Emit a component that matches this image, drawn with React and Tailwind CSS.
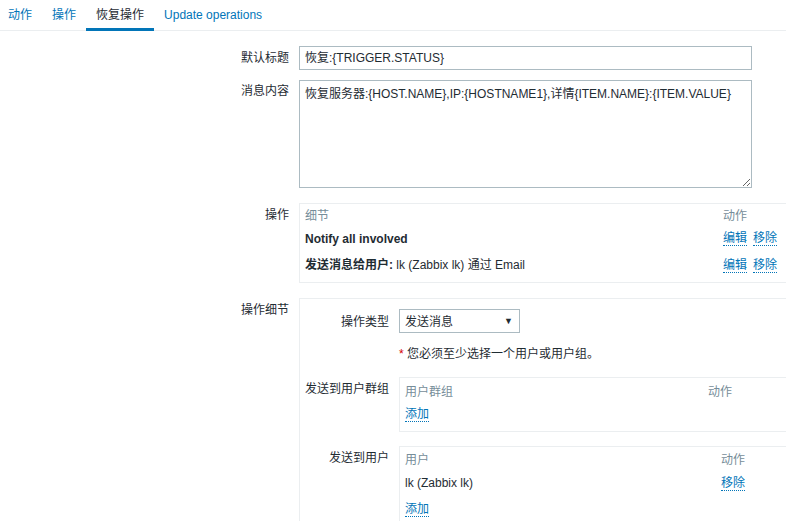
import React from 'react';

const Link = ({ children }) => (
  <span className="text-[#0275b8] border-b border-dotted border-[#0275b8] leading-[14px] cursor-pointer">
    {children}
  </span>
);

const Label = ({ children, className = '' }) => (
  <div className={`w-[299px] shrink-0 pr-[10px] text-right pt-[4px] ${className}`}>{children}</div>
);

const App = () => {
  const tabs = ['动作', '操作', '恢复操作', 'Update operations'];

  return (
    <div className="w-[786px] h-[521px] overflow-hidden bg-white text-[12px] leading-[14px] text-[#1f2c33] font-['Liberation_Sans','Noto_Sans_CJK_SC',sans-serif]">
      {/* 탭 */}
      <div className="flex h-[31px] border-b border-[#ebeef0] -ml-0.5">
        {tabs.map((t, i) => (
          <div
            key={t}
            className={`h-[31px] -mb-px px-[10px] pt-[8px] border-b-[3px] ${
              i === 2 ? 'border-[#0275b8] text-[#1f2c33]' : 'border-transparent text-[#0275b8]'
            }`}
          >
            {t}
          </div>
        ))}
      </div>

      <div className="mt-[15px]">
        {/* 默认标题 */}
        <div className="flex">
          <Label className="pt-[5px]">默认标题</Label>
          <div className="w-[453px] h-[24px] border border-[#acbbc2] px-[5px] flex items-center">
            恢复:{'{TRIGGER.STATUS}'}
          </div>
        </div>

        {/* 消息内容 */}
        <div className="flex mt-[10px]">
          <Label>消息内容</Label>
          <textarea
            className="w-[453px] h-[108px] border border-[#acbbc2] px-[5px] pt-[6px] text-[12px] leading-[14px] outline-none resize"
            defaultValue="恢复服务器:{HOST.NAME},IP:{HOSTNAME1},详情{ITEM.NAME}:{ITEM.VALUE}"
          />
        </div>

        {/* 操作 */}
        <div className="flex mt-[15px]">
          <Label className="pt-[5px]">操作</Label>
          <div className="w-[520px] shrink-0 border border-[#ebeef0] px-[5px] pt-[2px] pb-[3px]">
            <div className="flex h-[20px] items-center text-[#768d99]">
              <div className="w-[418px]">细节</div>
              <div>动作</div>
            </div>
            <div className="flex h-[25px] items-center">
              <div className="w-[418px] font-bold">Notify all involved</div>
              <div className="flex gap-[6px]">
                <Link>编辑</Link>
                <Link>移除</Link>
              </div>
            </div>
            <div className="flex h-[28px] items-center">
              <div className="w-[418px]">
                <span className="font-bold">发送消息给用户:</span> lk (Zabbix lk) 通过 Email
              </div>
              <div className="flex gap-[6px]">
                <Link>编辑</Link>
                <Link>移除</Link>
              </div>
            </div>
          </div>
        </div>

        {/* 操作细节 */}
        <div className="flex mt-[15px]">
          <Label className="pt-[5px]">操作细节</Label>
          <div className="w-[560px] shrink-0 border border-[#ebeef0] pt-[10px] pb-[20px]">
            <div className="flex">
              <div className="w-[99px] shrink-0 pr-[10px] text-right pt-[6px]">操作类型</div>
              <div className="w-[121px] h-[24px] border border-[#acbbc2] px-[5px] flex items-center justify-between">
                <span className="pt-[1px]">发送消息</span>
                <span className="text-[9px] mr-[1px]">▼</span>
              </div>
            </div>

            <div className="flex mt-[14px]">
              <div className="w-[99px] shrink-0" />
              <div>
                <span className="text-[#d40000]">*</span> 您必须至少选择一个用户或用户组。
              </div>
            </div>

            {/* 发送到用户群组 */}
            <div className="flex mt-[16px]">
              <div className="w-[99px] shrink-0 pr-[10px] text-right pt-[5px]">发送到用户群组</div>
              <div className="w-[420px] shrink-0 border border-[#ebeef0] px-[5px] pt-[3px] pb-[6px]">
                <div className="flex h-[22px] items-center text-[#768d99]">
                  <div className="w-[303px]">用户群组</div>
                  <div>动作</div>
                </div>
                <div className="flex h-[22px] items-center">
                  <Link>添加</Link>
                </div>
              </div>
            </div>

            {/* 发送到用户 */}
            <div className="flex mt-[14px]">
              <div className="w-[99px] shrink-0 pr-[10px] text-right pt-[5px]">发送到用户</div>
              <div className="w-[420px] shrink-0 border border-[#ebeef0] px-[5px] pt-[1px] pb-[4px]">
                <div className="flex h-[24px] items-center text-[#768d99]">
                  <div className="w-[316px]">用户</div>
                  <div>动作</div>
                </div>
                <div className="flex h-[22px] items-center">
                  <div className="w-[316px]">lk (Zabbix lk)</div>
                  <Link>移除</Link>
                </div>
                <div className="flex h-[30px] items-center">
                  <Link>添加</Link>
                </div>
              </div>
            </div>
          </div>
        </div>
      </div>
    </div>
  );
};

export default App;
